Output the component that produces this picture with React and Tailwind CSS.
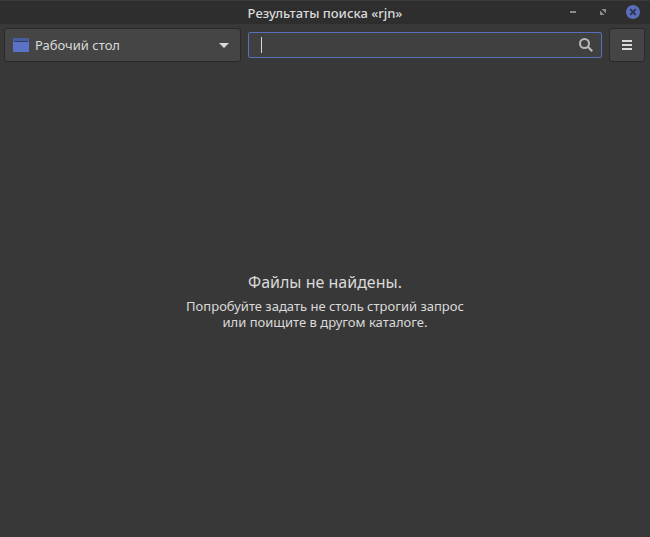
import React, { useState } from "react";

const places = ["Рабочий стол", "Домашняя папка", "Файловая система"];

const TitleBar = ({ title }) => (
  <header className="grid h-6 shrink-0 grid-cols-[1fr_auto_1fr] items-center bg-[#2e2e2e] inset-shadow-[0_1px_#3a3a3a]">
    <h1 className="col-start-2 pt-0.5 text-[13px] leading-5 font-medium text-[#dadada]">
      {title}
    </h1>
    <div className="flex items-center justify-end gap-4 pr-2.5">
      <button type="button" aria-label="Свернуть" className="h-3.5 w-3.5">
        <svg viewBox="0 0 14 14" className="h-3.5 w-3.5">
          <rect x="4" y="6" width="6" height="2" fill="#8c8c8c" />
        </svg>
      </button>
      <button type="button" aria-label="Развернуть" className="h-3.5 w-3.5">
        <svg viewBox="0 0 14 14" className="h-3.5 w-3.5" fill="#8c8c8c">
          <path d="M5.5 4H10v4.5z" />
          <path d="M4 5.5V10h4.5z" />
        </svg>
      </button>
      <button type="button" aria-label="Закрыть" className="h-3.5 w-3.5">
        <svg viewBox="0 0 14 14" className="h-3.5 w-3.5 overflow-visible">
          <circle cx="7" cy="7" r="7" fill="#5a6fb9" />
          <path d="M4.2 4.2l5.6 5.6M9.8 4.2l-5.6 5.6" stroke="#2e3450" strokeWidth="1.8" />
        </svg>
      </button>
    </div>
  </header>
);

const PlaceSelect = ({ place, setPlace }) => (
  <div className="relative h-[34px] flex-[67]">
    <select
      aria-label="Место поиска"
      value={place}
      onChange={(e) => setPlace(e.target.value)}
      className="h-full w-full appearance-none rounded-[3px] border border-[#292929] bg-[#454545] pr-8 pl-[30px] text-[13px] leading-5 text-[#dadada] outline-none"
    >
      {places.map((i) => (
        <option key={i}>{i}</option>
      ))}
    </select>
    <svg viewBox="0 0 16 14" className="pointer-events-none absolute top-2.5 left-[9px] h-3.5 w-4">
      <rect width="16" height="14" rx="1" fill="#5b73c6" />
      <path d="M0 3V1a1 1 0 0 1 1-1h14a1 1 0 0 1 1 1v2z" fill="#485ca0" />
      <rect x="1" y="3" width="14" height="1" fill="#2f3b69" />
    </svg>
    <svg viewBox="0 0 10 5" className="pointer-events-none absolute top-[15px] right-3 h-[5px] w-2.5">
      <path d="M0 0h10L5 5z" fill="#dadada" />
    </svg>
  </div>
);

const SearchBox = ({ query, setQuery }) => (
  <div className="relative h-[26px] flex-[100]">
    <input
      type="text"
      aria-label="Поиск"
      value={query}
      onChange={(e) => setQuery(e.target.value)}
      className="peer block h-full w-full rounded-[2px] border border-[#5a6fb9] bg-[#404040] pr-8 pl-3 text-[13px] text-[#dadada] outline-none"
    />
    {query === "" && (
      <span className="pointer-events-none absolute top-[5px] left-[13px] h-4 w-px bg-[#dadada] peer-focus:hidden" />
    )}
    <svg
      viewBox="0 0 14 14"
      fill="none"
      stroke="#b8b8b8"
      className="pointer-events-none absolute top-1.5 right-[9px] h-3.5 w-3.5"
    >
      <circle cx="5.5" cy="5.5" r="4.5" strokeWidth="2" />
      <path d="M8.8 8.8l4.4 4.4" strokeWidth="2.2" />
    </svg>
  </div>
);

const App = () => {
  const [place, setPlace] = useState(places[0]);
  const [query, setQuery] = useState("");

  return (
    <div className="flex min-h-screen flex-col bg-[#383838] font-['Noto_Sans',sans-serif]">
      <TitleBar title="Результаты поиска «rjn»" />
      <div className="flex items-center gap-[7px] pt-1 pr-[5px] pl-1">
        <PlaceSelect place={place} setPlace={setPlace} />
        <SearchBox query={query} setQuery={setQuery} />
        <button
          type="button"
          aria-label="Меню"
          className="flex h-[34px] w-9 items-center justify-center rounded-[3px] border border-[#292929] bg-[#454545]"
        >
          <svg viewBox="0 0 10 10" className="h-2.5 w-2.5" fill="#dadada">
            <rect width="10" height="2" />
            <rect y="4" width="10" height="2" />
            <rect y="8" width="10" height="2" />
          </svg>
        </button>
      </div>
      <main className="flex flex-1 flex-col items-center justify-center gap-1 px-4 text-center text-[#dadada]">
        <h2 className="text-base leading-6">Файлы не найдены.</h2>
        <p className="text-[13px] leading-4">
          Попробуйте задать не столь строгий запрос
          <br />
          или поищите в другом каталоге.
        </p>
      </main>
    </div>
  );
};

export default App;
